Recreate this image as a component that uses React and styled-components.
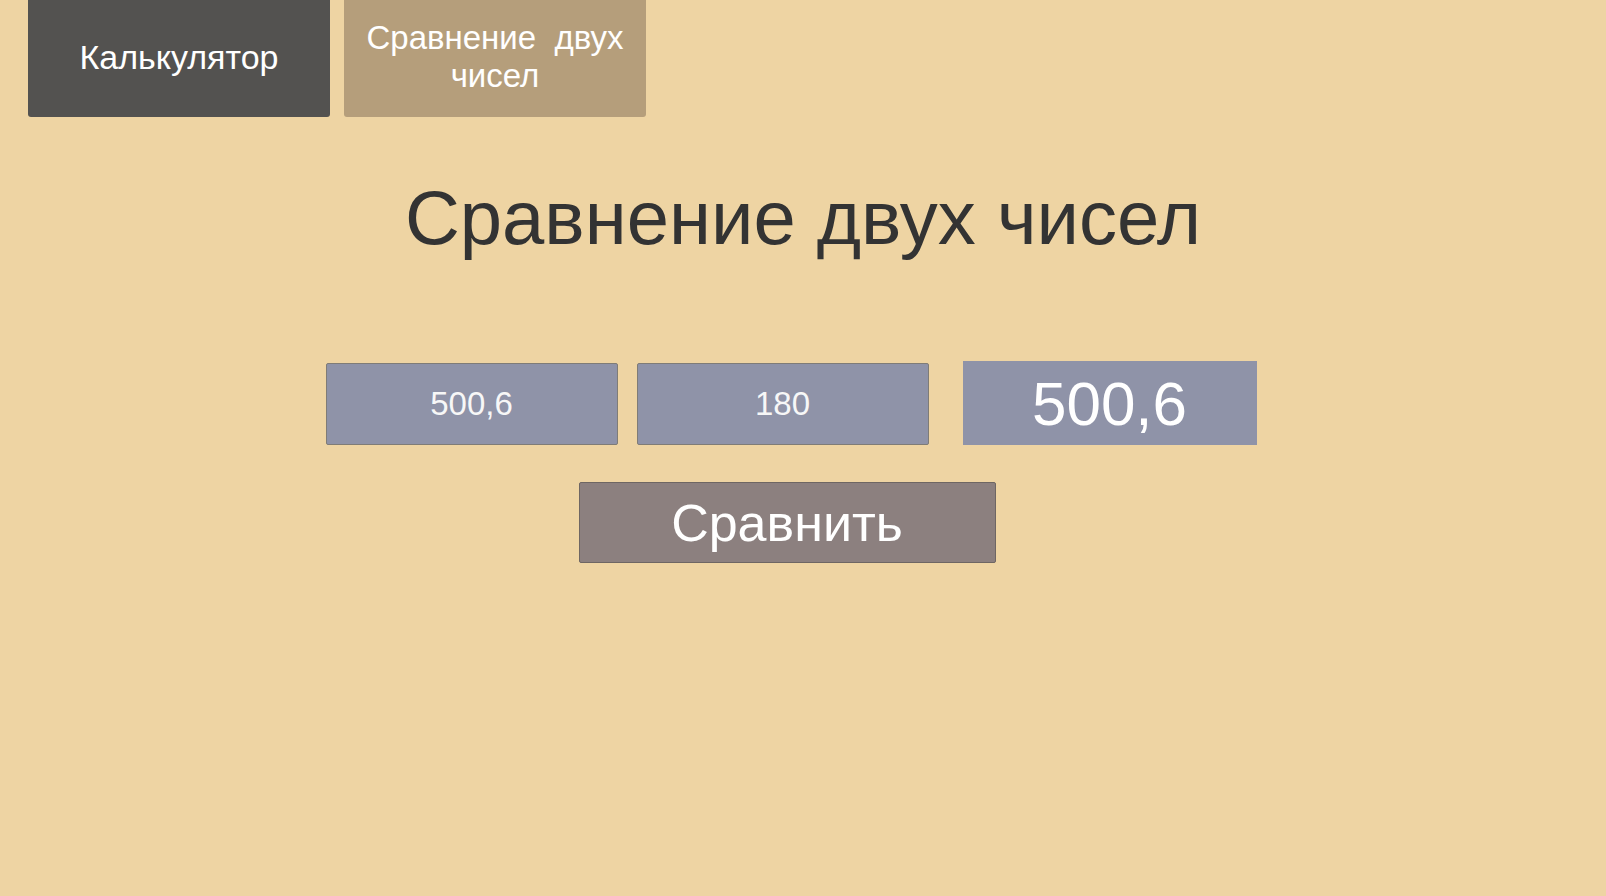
import React from 'react';
import styled, { createGlobalStyle } from 'styled-components';

const GlobalStyle = createGlobalStyle`
  html, body {
    margin: 0;
    padding: 0;
    background: #eed4a3;
  }
  body {
    font-family: 'Liberation Sans', Arial, sans-serif;
  }
`;

const Page = styled.div`
  width: 100%;
  min-height: 896px;
  background: #eed4a3;
  display: flex;
  flex-direction: column;
`;

const TabBar = styled.nav`
  display: flex;
  gap: 14px;
  padding-left: 28px;
`;

const Tab = styled.button`
  width: 302px;
  height: 117px;
  border: none;
  border-radius: 0 0 3px 3px;
  background: ${props => (props.active ? '#535250' : '#b59e7b')};
  color: #ffffff;
  font-family: 'Liberation Sans', Arial, sans-serif;
  font-size: ${props => props.size || 34}px;
  line-height: 38px;
  text-align: center;
  padding: 0 8px 4px;
  white-space: pre-wrap;
  cursor: pointer;
`;

const Title = styled.h1`
  margin: 63px 0 0;
  text-align: center;
  font-family: 'Liberation Sans', Arial, sans-serif;
  font-weight: normal;
  font-size: 76px;
  line-height: 1;
  color: #333333;
`;

const Form = styled.div`
  margin-top: 105px;
  display: flex;
  flex-direction: column;
  align-items: center;
  padding-right: 24px;
`;

const Row = styled.div`
  display: flex;
  align-items: flex-start;
`;

const NumberInput = styled.input`
  box-sizing: border-box;
  width: 292px;
  height: 82px;
  margin-top: 2px;
  margin-right: ${props => props.gap || 0}px;
  border: 1px solid #7f7c77;
  border-radius: 2px;
  background: #8f93a8;
  color: #f7f7f7;
  font-family: 'Liberation Sans', Arial, sans-serif;
  font-size: 33px;
  text-align: center;
  outline: none;
`;

const Result = styled.output`
  width: 294px;
  height: 84px;
  background: #8f93a8;
  color: #ffffff;
  font-family: 'Liberation Sans', Arial, sans-serif;
  font-size: 62px;
  display: flex;
  align-items: center;
  justify-content: center;
`;

const CompareButton = styled.button`
  box-sizing: border-box;
  margin-top: 37px;
  margin-right: 8px;
  width: 417px;
  height: 81px;
  border: 1px solid #6e6663;
  border-radius: 2px;
  background: #8c807f;
  color: #ffffff;
  font-family: 'Liberation Sans', Arial, sans-serif;
  font-size: 52px;
  cursor: pointer;
`;

export default function App() {
  return (
    <Page>
      <GlobalStyle />
      <TabBar>
        <Tab active>Калькулятор</Tab>
        <Tab size={33}>{'Сравнение  двух\nчисел'}</Tab>
      </TabBar>
      <Title>Сравнение двух чисел</Title>
      <Form>
        <Row>
          <NumberInput defaultValue="500,6" gap={19} />
          <NumberInput defaultValue="180" gap={34} />
          <Result>500,6</Result>
        </Row>
        <CompareButton>Сравнить</CompareButton>
      </Form>
    </Page>
  );
}
